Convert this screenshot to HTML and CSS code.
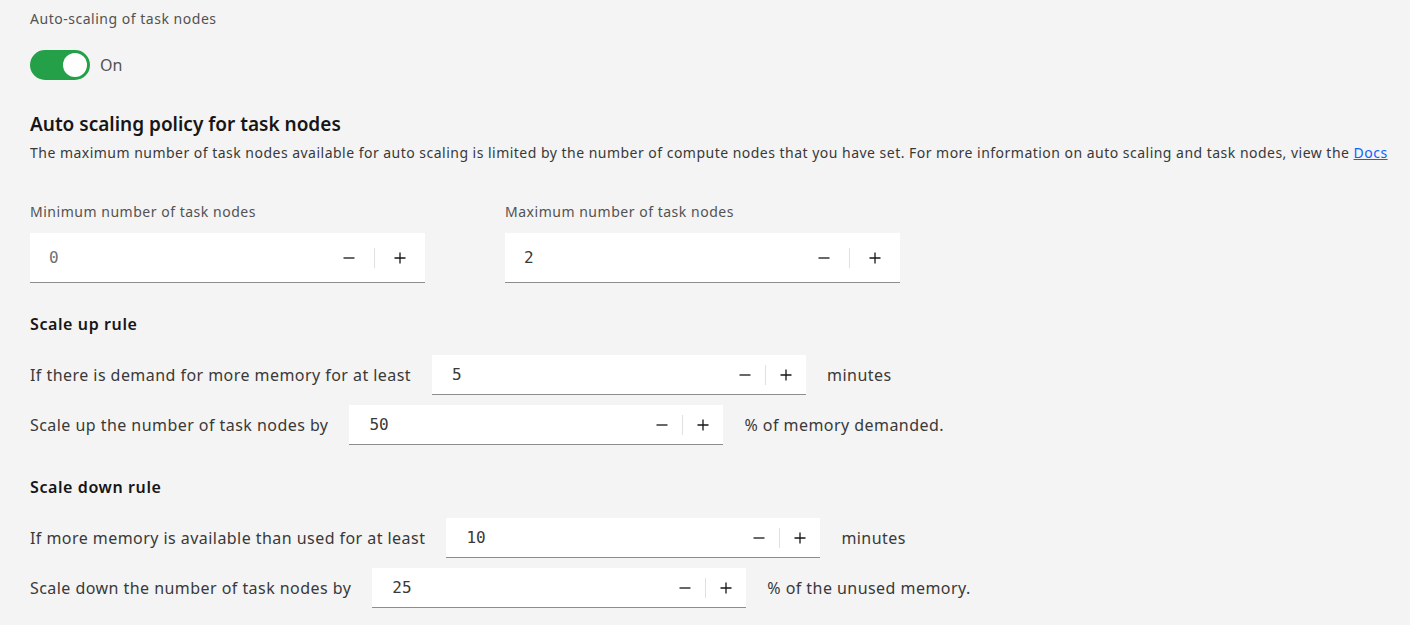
FILE: index.html
```html
<!DOCTYPE html>
<html lang="en">
<head>
<meta charset="utf-8">
<title>Auto scaling</title>
<link rel="stylesheet" href="styles.css">
</head>
<body>
<div class="page">
  <div class="field-label">Auto-scaling of task nodes</div>
  <div class="toggle-row">
    <span class="toggle"><span class="knob"></span></span>
    <span class="toggle-text">On</span>
  </div>

  <h2 class="heading">Auto scaling policy for task nodes</h2>
  <p class="desc">The maximum number of task nodes available for auto scaling is limited by the number of compute nodes that you have set. For more information on auto scaling and task nodes, view the <a href="#" class="link">Docs</a></p>

  <div class="pair">
    <div class="field">
      <div class="field-label">Minimum number of task nodes</div>
      <div class="num num-lg">
        <span class="val val-light">0</span>
        <span class="btn"><svg width="12" height="12" viewBox="0 0 12 12"><path d="M0.5 6h11" stroke="#161616" stroke-width="1.3"/></svg></span>
        <span class="div"></span>
        <span class="btn"><svg width="12" height="12" viewBox="0 0 12 12"><path d="M0.5 6h11M6 0.5v11" stroke="#161616" stroke-width="1.3"/></svg></span>
      </div>
    </div>
    <div class="field">
      <div class="field-label">Maximum number of task nodes</div>
      <div class="num num-lg">
        <span class="val">2</span>
        <span class="btn"><svg width="12" height="12" viewBox="0 0 12 12"><path d="M0.5 6h11" stroke="#161616" stroke-width="1.3"/></svg></span>
        <span class="div"></span>
        <span class="btn"><svg width="12" height="12" viewBox="0 0 12 12"><path d="M0.5 6h11M6 0.5v11" stroke="#161616" stroke-width="1.3"/></svg></span>
      </div>
    </div>
  </div>

  <h3 class="sub">Scale up rule</h3>
  <div class="rule">
    <span class="rule-text">If there is demand for more memory for at least</span>
    <div class="num num-sm">
      <span class="val">5</span>
      <span class="btn"><svg width="12" height="12" viewBox="0 0 12 12"><path d="M0.5 6h11" stroke="#161616" stroke-width="1.3"/></svg></span>
      <span class="div"></span>
      <span class="btn"><svg width="12" height="12" viewBox="0 0 12 12"><path d="M0.5 6h11M6 0.5v11" stroke="#161616" stroke-width="1.3"/></svg></span>
    </div>
    <span class="rule-text">minutes</span>
  </div>
  <div class="rule">
    <span class="rule-text">Scale up the number of task nodes by</span>
    <div class="num num-sm">
      <span class="val">50</span>
      <span class="btn"><svg width="12" height="12" viewBox="0 0 12 12"><path d="M0.5 6h11" stroke="#161616" stroke-width="1.3"/></svg></span>
      <span class="div"></span>
      <span class="btn"><svg width="12" height="12" viewBox="0 0 12 12"><path d="M0.5 6h11M6 0.5v11" stroke="#161616" stroke-width="1.3"/></svg></span>
    </div>
    <span class="rule-text">% of memory demanded.</span>
  </div>

  <h3 class="sub sub-down">Scale down rule</h3>
  <div class="rule">
    <span class="rule-text">If more memory is available than used for at least</span>
    <div class="num num-sm">
      <span class="val">10</span>
      <span class="btn"><svg width="12" height="12" viewBox="0 0 12 12"><path d="M0.5 6h11" stroke="#161616" stroke-width="1.3"/></svg></span>
      <span class="div"></span>
      <span class="btn"><svg width="12" height="12" viewBox="0 0 12 12"><path d="M0.5 6h11M6 0.5v11" stroke="#161616" stroke-width="1.3"/></svg></span>
    </div>
    <span class="rule-text">minutes</span>
  </div>
  <div class="rule">
    <span class="rule-text">Scale down the number of task nodes by</span>
    <div class="num num-sm">
      <span class="val">25</span>
      <span class="btn"><svg width="12" height="12" viewBox="0 0 12 12"><path d="M0.5 6h11" stroke="#161616" stroke-width="1.3"/></svg></span>
      <span class="div"></span>
      <span class="btn"><svg width="12" height="12" viewBox="0 0 12 12"><path d="M0.5 6h11M6 0.5v11" stroke="#161616" stroke-width="1.3"/></svg></span>
    </div>
    <span class="rule-text">% of the unused memory.</span>
  </div>
</div>
</body>
</html>
```

FILE: styles.css
```css
html, body {
  margin: 0;
  padding: 0;
  background: #f4f4f4;
}
body {
  font-family: "Noto Sans", "Liberation Sans", sans-serif;
  color: #161616;
}
.page {
  padding: 10px 30px 0 30px;
}
.field-label {
  font-size: 14px;
  line-height: 18px;
  letter-spacing: 0.52px;
  color: #525252;
}
.toggle-row {
  display: flex;
  align-items: center;
  gap: 10px;
  margin-top: 22px;
}
.toggle {
  display: flex;
  align-items: center;
  justify-content: flex-end;
  width: 60px;
  height: 30px;
  border-radius: 15px;
  background: #24a148;
  padding: 0 3px;
  box-sizing: border-box;
}
.knob {
  width: 24px;
  height: 24px;
  border-radius: 50%;
  background: #ffffff;
}
.toggle-text {
  font-size: 16px;
  color: #525252;
}
.heading {
  margin: 31px 0 0 0;
  font-size: 19px;
  line-height: 26px;
  font-weight: 600;
  color: #161616;
}
.desc {
  margin: 6px 0 0 0;
  font-size: 14px;
  line-height: 20px;
  letter-spacing: 0.48px;
  color: #393939;
  white-space: nowrap;
}
.link {
  color: #0f62fe;
  text-decoration: underline;
}
.pair {
  display: flex;
  gap: 80px;
  margin-top: 40px;
}
.field {
  display: flex;
  flex-direction: column;
  gap: 12px;
}
.num {
  display: flex;
  align-items: center;
  background: #ffffff;
  border-bottom: 1px solid #8d8d8d;
  box-sizing: border-box;
}
.num-lg {
  width: 395px;
  height: 50px;
  padding-left: 19px;
}
.num-lg .btn {
  width: 50px;
  height: 50px;
}
.num-sm {
  width: 374px;
  height: 40px;
  padding-left: 20px;
}
.num-sm .btn {
  width: 40px;
  height: 40px;
}
.val {
  flex: 1;
  font-family: "DejaVu Sans Mono", "Liberation Mono", monospace;
  font-size: 16px;
  color: #393939;
}
.val-light {
  color: #6f6f6f;
}
.btn {
  display: flex;
  align-items: center;
  justify-content: center;
}
.div {
  width: 1px;
  height: 20px;
  background: #e0e0e0;
}
.sub {
  margin: 30px 0 20px 0;
  font-size: 16px;
  line-height: 22px;
  font-weight: 600;
  letter-spacing: 0.6px;
  color: #161616;
}
.sub-down {
  margin-top: 31px;
}
.rule {
  display: flex;
  align-items: center;
  gap: 21px;
  margin-bottom: 10px;
}
.rule-text {
  font-size: 16px;
  letter-spacing: 0.45px;
  color: #393939;
}
```
